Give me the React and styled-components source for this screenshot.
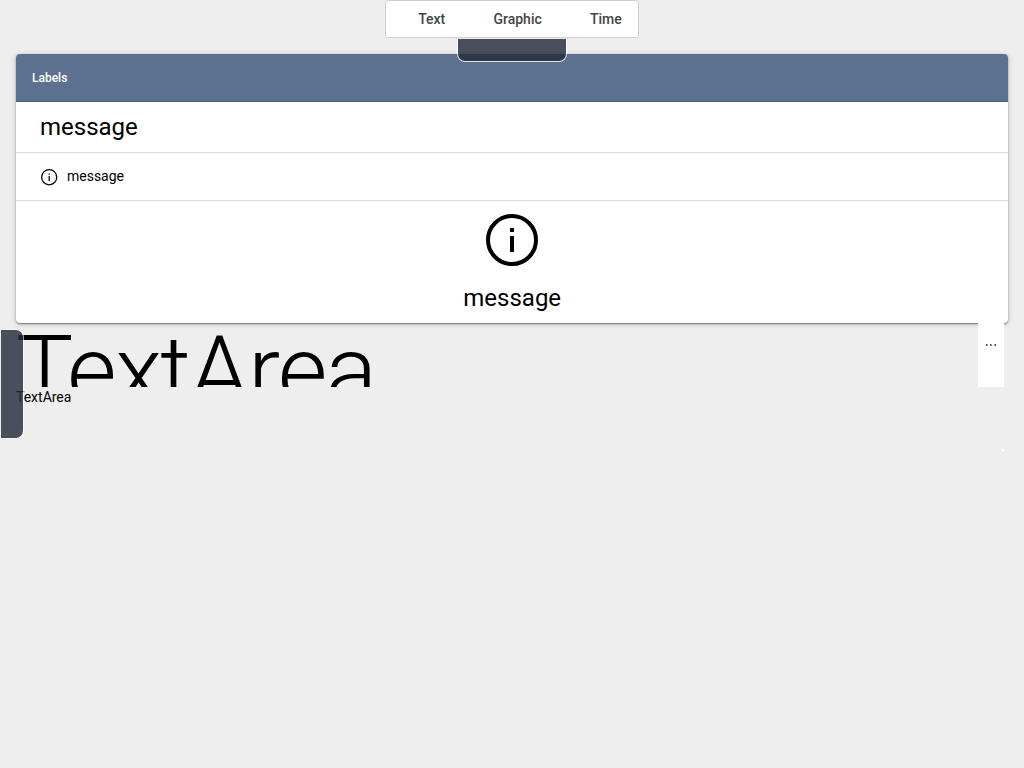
import React from "react";
import styled, { createGlobalStyle } from "styled-components";

const GlobalStyle = createGlobalStyle`
  * { box-sizing: border-box; }
  body {
    margin: 0;
    height: 768px;
    overflow: hidden;
    background: #eee;
    color: #000;
    font-family: Roboto, sans-serif;
    font-size: 14px;
  }
`;

const Page = styled.div`
  position: relative;
  height: 768px;
  padding: 54px 16px 0;
`;

const TopMenu = styled.nav`
  position: absolute;
  z-index: 3;
  top: 0;
  left: 385px;
  width: 254px;
  height: 38px;
  display: flex;
  align-items: center;
  gap: 48.2px;
  padding-left: 32.2px;
  background: #fff;
  border: 1px solid #d0d0d0;
  border-radius: 3px;
`;

const MenuItem = styled.span`
  font-weight: 500;
  line-height: 20px;
  color: #444;
  white-space: nowrap;
`;

const TopHandle = styled.div`
  position: absolute;
  z-index: 2;
  top: 39px;
  left: 457px;
  width: 110px;
  height: 23px;
  background: rgba(34, 43, 57, 0.81);
  background-clip: padding-box;
  border: 1px solid rgba(255, 255, 255, 0.8);
  border-top: 0;
  border-radius: 0 0 8px 8px;
`;

const SideHandle = styled.div`
  position: absolute;
  z-index: 2;
  top: 329px;
  left: 1px;
  width: 23px;
  height: 110px;
  background: rgba(34, 43, 57, 0.81);
  background-clip: padding-box;
  border: 1px solid rgba(255, 255, 255, 0.6);
  border-left: 0;
  border-radius: 0 8px 8px 0;
`;

const Card = styled.section`
  height: 269px;
  background: #fff;
  border-radius: 4px;
  overflow: hidden;
  box-shadow: 0 1px 4px rgba(0, 0, 0, 0.3), 0 1px 1px rgba(0, 0, 0, 0.35);
`;

const CardHeader = styled.header`
  height: 48px;
  padding: 0 16px;
  display: flex;
  align-items: center;
  background: #5c7190;
  border-bottom: 1px solid #4e617e;
  color: #fff;
  font-size: 12px;
  font-weight: 500;
`;

const Row = styled.div`
  height: ${(p) => p.$height}px;
  padding: 0 24px ${(p) => p.$lift || 0}px;
  display: flex;
  align-items: center;
  border-bottom: 1px solid #ddd;
`;

const Stack = styled.div`
  display: flex;
  flex-direction: column;
  align-items: center;
  padding-top: 13px;
`;

const Message = styled.span`
  font-size: ${(p) => (p.$large ? 24 : 14)}px;
  line-height: ${(p) => (p.$large ? 32 : 20)}px;
`;

const StackMessage = styled(Message)`
  padding-left: 0.4px;
`;

const InfoSvg = styled.svg`
  flex: none;
  overflow: visible;
  width: ${(p) => p.$size}px;
  height: ${(p) => p.$size}px;
  margin: ${(p) => p.$margin};
`;

const Preview = styled.div`
  height: 64px;
  display: flex;
  justify-content: space-between;
  padding-right: 4px;
`;

const Headline = styled.div`
  height: 64px;
  overflow: hidden;
  font-size: 96px;
  font-weight: 300;
  line-height: 96px;
  letter-spacing: -1.6px;
`;

const More = styled.div`
  width: 26px;
  height: 64px;
  background: #fff;
  display: flex;
  justify-content: center;
  padding-top: 21px;
`;

const Caption = styled.div`
  line-height: 20px;
`;

const Speck = styled.div`
  width: 2px;
  height: 2px;
  margin: 42px 4px 0 auto;
  background: #fff;
`;

function InfoIcon({ size, margin }) {
  return (
    <InfoSvg $size={size} $margin={margin} viewBox="0 0 52 52">
      <circle cx="26" cy="26" r="24" fill="none" stroke="#000" strokeWidth="4" />
      <path d="M24 14h4v4h-4zM24 22h4v16h-4z" />
    </InfoSvg>
  );
}

export default function App() {
  return (
    <Page>
      <GlobalStyle />
      <TopMenu>
        <MenuItem>Text</MenuItem>
        <MenuItem>Graphic</MenuItem>
        <MenuItem>Time</MenuItem>
      </TopMenu>
      <TopHandle />
      <SideHandle />
      <Card>
        <CardHeader>Labels</CardHeader>
        <Row $height={51}>
          <Message $large>message</Message>
        </Row>
        <Row $height={48} $lift={2}>
          <InfoIcon size={16.4} margin="3px 9.2px 0 1.4px" />
          <Message>message</Message>
        </Row>
        <Stack>
          <InfoIcon size={52} margin="0 0 16px" />
          <StackMessage $large>message</StackMessage>
        </Stack>
      </Card>
      <Preview>
        <Headline>TextArea</Headline>
        <More>
          <svg width="12" height="2" viewBox="0 0 12 2" fill="#999">
            <path d="M1 0h2v2H1zM5 0h2v2H5zM9 0h2v2H9z" />
            <path d="M1 0h1v2H1zM5 0h1v2H5zM10 0h1v2h-1z" fill="#555" />
          </svg>
        </More>
      </Preview>
      <Caption>TextArea</Caption>
      <Speck />
    </Page>
  );
}
